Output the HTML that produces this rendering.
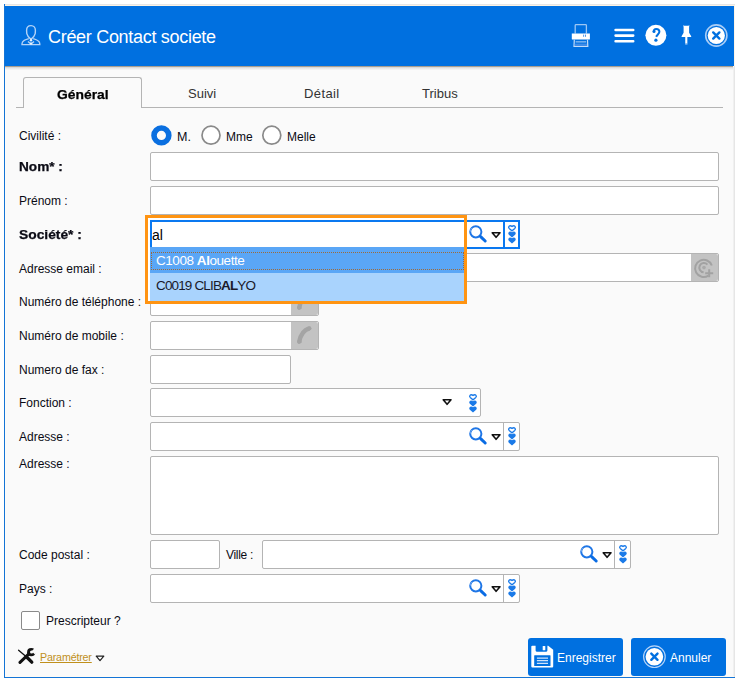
<!DOCTYPE html>
<html>
<head>
<meta charset="utf-8">
<style>
html,body{margin:0;padding:0;background:#fff;}
body{width:736px;height:678px;position:relative;overflow:hidden;font-family:"Liberation Sans",sans-serif;color:#1a1a1a;}
.a{position:absolute;}
#win{left:4px;top:4px;width:731px;height:674px;background:#fafafa;}
#topline{left:4px;top:4px;width:731px;height:1px;background:#e6e6e6;}
#topline2{left:5px;top:5px;width:729px;height:1px;background:#fdf3e4;}
#lb{left:4px;top:4px;width:1px;height:674px;background:#1474d6;}
#bb{left:4px;top:677px;width:731px;height:1px;background:#1474d6;}
#rb{left:733px;top:67px;width:1px;height:610px;background:#f0f0f0;}
#rb2{left:734px;top:5px;width:1px;height:672px;background:#e6e6e6;}
#hcream{left:734px;top:5px;width:1px;height:61px;background:#fdf5e8;}
#cream2{left:5px;top:67px;width:1px;height:610px;background:#fdfcf8;}
#cream3{left:5px;top:676px;width:729px;height:1px;background:#fdfbf6;}
#hdr{left:5px;top:6px;width:729px;height:60px;background:#0070e0;}
#hshadow{left:5px;top:66px;width:728px;height:1px;background:#a99f91;}
#hshadow2{left:5px;top:67px;width:728px;height:3px;background:linear-gradient(#d2d2d2,#eeeeee 60%,#f7f7f7);}
.title{left:48px;top:27px;font-size:18px;letter-spacing:-0.3px;color:#fff;white-space:nowrap;}
.lbl{font-size:12px;white-space:nowrap;color:#0a0a14;}
.b{font-weight:bold;-webkit-text-stroke:0.25px currentColor;}
.fld{background:#fff;border:1px solid #b4b4b4;border-radius:2px;box-sizing:border-box;}
.btn{background:#c3c3c3;border-radius:0 2px 2px 0;}
.sep{width:1px;background:#b4b4b4;}
.tab{font-size:13px;white-space:nowrap;color:#333;}
</style>
</head>
<body>

<svg width="0" height="0" style="position:absolute">
 <defs>
  <symbol id="mag" viewBox="0 0 20 20">
   <circle cx="7.4" cy="7.4" r="5.6" fill="none" stroke="#1f76e6" stroke-width="2"/>
   <path d="M1.9 7.4a5.5 5.5 0 0 1 1.6-3.9" fill="none" stroke="#6aa5f0" stroke-width="1"/>
   <path d="M12.2 12.2l4.6 4.4" stroke="#0a6ce4" stroke-width="3" stroke-linecap="round"/>
  </symbol>
  <symbol id="arr" viewBox="0 0 12 9">
   <path d="M2.2 2.8h7.8L6.1 7.3z" fill="#fff" stroke="#111" stroke-width="1.6" stroke-linejoin="round"/>
  </symbol>
  <symbol id="spin" viewBox="0 0 10 20">
   <path d="M2 2.4c.7-.8 1.8-.8 3 0 1.2-.8 2.3-.8 3 0 .6.7.3 1.5-.2 2L5 6.8 2.2 4.4c-.5-.5-.8-1.3-.2-2z" fill="none" stroke="#1a7ae8" stroke-width="1.3"/>
   <path d="M1.5 8.4c.7-1 2.2-1 3.5-.2 1.3-.8 2.8-.8 3.5.2.6 1 0 2-.6 2.5L5 13.4 2.1 10.9c-.6-.5-1.2-1.5-.6-2.5z" fill="#1a7ae8"/>
   <path d="M1.5 14.4c.7-1 2.2-1 3.5-.2 1.3-.8 2.8-.8 3.5.2.6 1 0 2-.6 2.5L5 19.4 2.1 16.9c-.6-.5-1.2-1.5-.6-2.5z" fill="#1a7ae8"/>
  </symbol>
 </defs>
</svg>
<div class="a" id="win"></div>
<div class="a" id="topline"></div>
<div class="a" id="topline2"></div>
<div class="a" id="hdr"></div>
<div class="a" id="lb"></div>
<div class="a" id="bb"></div>
<div class="a" id="rb"></div><div class="a" id="rb2"></div><div class="a" id="hcream"></div><div class="a" id="cream2"></div><div class="a" id="cream3"></div>
<div class="a" id="hshadow"></div>
<div class="a" id="hshadow2"></div>

<!-- header content -->
<div class="a title">Créer Contact societe</div>

<!-- tabs -->
<div class="a" style="left:16px;top:107px;width:707px;height:1px;background:#b4b4b4;"></div>
<div class="a" style="left:23px;top:77px;width:119px;height:31px;box-sizing:border-box;border:1px solid #b4b4b4;border-bottom:none;border-radius:3px 3px 0 0;background:#fafafa;"></div>
<div class="a tab b" style="left:57px;top:87px;font-size:13px;color:#000;transform:scaleX(1.065);transform-origin:0 0;">Général</div>
<div class="a tab" style="left:188px;top:86px;">Suivi</div>
<div class="a tab" style="left:304px;top:86px;letter-spacing:0.4px;">Détail</div>
<div class="a tab" style="left:422px;top:86px;">Tribus</div>

<!-- labels -->
<div class="a lbl" style="left:19px;top:129px;">Civilité :</div>
<div class="a lbl b" style="left:19px;top:160px;transform:scaleX(1.135);transform-origin:0 0;">Nom* :</div>
<div class="a lbl" style="left:19px;top:194px;">Prénom :</div>
<div class="a lbl b" style="left:19px;top:228px;transform:scaleX(1.15);transform-origin:0 0;">Société* :</div>
<div class="a lbl" style="left:19px;top:262px;">Adresse email :</div>
<div class="a lbl" style="left:19px;top:295px;">Numéro de téléphone :</div>
<div class="a lbl" style="left:19px;top:329px;">Numéro de mobile :</div>
<div class="a lbl" style="left:19px;top:363px;">Numero de fax :</div>
<div class="a lbl" style="left:19px;top:396px;">Fonction :</div>
<div class="a lbl" style="left:19px;top:430px;">Adresse :</div>
<div class="a lbl" style="left:19px;top:457px;">Adresse :</div>
<div class="a lbl" style="left:19px;top:548px;">Code postal :</div>
<div class="a lbl" style="left:19px;top:582px;">Pays :</div>

<!-- fields -->
<div class="a fld" style="left:150px;top:152px;width:569px;height:29px;"></div>
<div class="a fld" style="left:150px;top:186px;width:569px;height:29px;"></div>
<div class="a fld" style="left:150px;top:253px;width:569px;height:29px;"></div>
<div class="a fld" style="left:150px;top:287px;width:169px;height:29px;"></div>
<div class="a fld" style="left:150px;top:321px;width:169px;height:29px;"></div>
<div class="a fld" style="left:150px;top:355px;width:141px;height:29px;"></div>
<div class="a fld" style="left:150px;top:388px;width:331px;height:29px;"></div>
<div class="a fld" style="left:150px;top:422px;width:370px;height:29px;"></div>
<div class="a fld" style="left:150px;top:456px;width:569px;height:79px;"></div>
<div class="a fld" style="left:150px;top:540px;width:70px;height:29px;"></div>
<div class="a lbl" style="left:226px;top:548px;letter-spacing:-0.3px;">Ville :</div>
<div class="a fld" style="left:262px;top:540px;width:369px;height:29px;"></div>
<div class="a fld" style="left:150px;top:574px;width:370px;height:29px;"></div>


<!-- header icons -->
<svg class="a" style="left:18px;top:22px" width="26" height="26" viewBox="0 0 26 26">
 <g fill="none" stroke="#b3d3f7" stroke-width="1.4">
  <path d="M13 3.6C10.3 3.6 8.6 5.5 8.6 8.4L8.8 11.6C9.2 13.4 10.8 15.6 13 17.4 15.2 15.6 16.8 13.4 17.2 11.6L17.4 8.4C17.4 5.5 15.7 3.6 13 3.6Z"/>
  <path d="M10.8 16.6C7.4 17.6 5 18.8 4.4 20.2 4 21 4 21.8 4 22.6H21.8C21.8 21.8 21.8 21 21.4 20.2 20.8 18.8 18.4 17.6 15.2 16.6"/>
  <path d="M10 19.6C11 20.6 12 21.4 13 21.6 14 21.4 15 20.6 16 19.6"/>
 </g>
 <circle cx="13" cy="18.2" r="1.2" fill="#e8f2fd"/><circle cx="13" cy="21.6" r="1.2" fill="#e8f2fd"/>
</svg>
<!-- printer -->
<svg class="a" style="left:566px;top:20px" width="30" height="30" viewBox="0 0 30 30">
 <path d="M9.2 13.6V5.4Q9.2 4.6 10 4.6H19.6Q20.4 4.6 20.4 5.4V13.6" fill="none" stroke="#9cc6f4" stroke-width="1.3"/>
 <path d="M5.8 13.4H23.9V18.9Q23.9 19.6 23.2 19.6H6.5Q5.8 19.6 5.8 18.9Z" fill="#fff"/>
 <rect x="17.2" y="14.6" width="0.9" height="2.2" fill="#3c8be6"/><rect x="19.1" y="14.6" width="0.9" height="2.2" fill="#3c8be6"/>
 <path d="M8.3 19.6L8 26.4H21.8L21.5 19.6" fill="none" stroke="#c4dcf8" stroke-width="1.2"/>
 <rect x="9.6" y="21.2" width="10.6" height="1.3" fill="#8ebdf2"/>
 <rect x="8.8" y="23.6" width="12.2" height="2.4" fill="#3f8ce8"/>
</svg>
<!-- hamburger -->
<svg class="a" style="left:613px;top:27px" width="23" height="17" viewBox="0 0 23 17">
 <g stroke="#fff" stroke-width="2.6" stroke-linecap="round"><path d="M2.6 3h17.6M2.6 8.6h17.6M2.6 14.2h17.6"/></g>
</svg>
<!-- help -->
<svg class="a" style="left:644px;top:23px" width="24" height="24" viewBox="0 0 24 24">
 <circle cx="11.9" cy="12.3" r="10.5" fill="#fff"/>
 <path d="M9.8 8.8C9.6 7 10.6 6 12.2 6 13.9 6 15.4 7 15.4 8.8 15.4 10.6 13.2 11.6 12.1 13.8" fill="none" stroke="#0070e0" stroke-width="2"/>
 <circle cx="10" cy="8.6" r="1.5" fill="#0070e0"/>
 <circle cx="11.9" cy="17.2" r="1.6" fill="#0070e0"/>
</svg>
<!-- pin -->
<svg class="a" style="left:680px;top:24px" width="13" height="22" viewBox="0 0 13 22">
 <path d="M3.2 1.2Q4.6 1.9 6.3 1.7Q8 1.9 9.4 1.2L9.1 3V8.8L11.2 12.2V13.1H1.6V12.2L3.6 8.8V3Z" fill="#fff"/>
 <path d="M6.3 12.6V20.6" stroke="#fff" stroke-width="2.1"/>
 <path d="M6.3 19V21" stroke="#0070e0" stroke-opacity="0.4" stroke-width="2.1"/>
</svg>
<!-- close -->
<svg class="a" style="left:704px;top:23px" width="25" height="25" viewBox="0 0 25 25">
 <circle cx="12.3" cy="12.5" r="10.6" fill="none" stroke="#a9cdf6" stroke-width="1.6"/>
 <circle cx="12.3" cy="12.5" r="8.6" fill="#fff"/>
 <path d="M9.2 9.4l6.2 6.2M15.4 9.4l-6.2 6.2" stroke="#0070e0" stroke-width="2.4" stroke-linecap="round"/>
</svg>

<!-- radios -->
<svg class="a" style="left:150px;top:124px" width="22" height="22" viewBox="0 0 22 22">
 <circle cx="11.4" cy="11.4" r="7.4" fill="none" stroke="#0a6fe0" stroke-width="5.6"/>
</svg>
<div class="a lbl" style="left:177px;top:130px;font-size:12.5px;">M.</div>
<svg class="a" style="left:200px;top:124px" width="22" height="22" viewBox="0 0 22 22">
 <circle cx="11" cy="11.2" r="9" fill="#fff" stroke="#8a8a8a" stroke-width="1.7"/>
</svg>
<div class="a lbl" style="left:226px;top:130px;">Mme</div>
<svg class="a" style="left:261px;top:124px" width="22" height="22" viewBox="0 0 22 22">
 <circle cx="10.8" cy="11.2" r="9" fill="#fff" stroke="#8a8a8a" stroke-width="1.7"/>
</svg>
<div class="a lbl" style="left:287px;top:130px;">Melle</div>

<!-- email/phone buttons -->
<div class="a btn" style="left:691px;top:254px;width:27px;height:27px;"></div>
<svg class="a" style="left:692px;top:255px" width="26" height="26" viewBox="0 0 26 26">
 <path d="M19.8 10.5A8.6 8.6 0 1 0 16.4 20.6" fill="none" stroke="#a2a2a2" stroke-width="2"/>
 <path d="M15.4 9.6A4.6 4.6 0 1 0 11.6 17.2" fill="none" stroke="#a2a2a2" stroke-width="2"/>
 <circle cx="12" cy="12.6" r="1.8" fill="#aaa"/>
 <path d="M17.2 14.2v8M13.2 18.2h8" stroke="#a2a2a2" stroke-width="2"/>
</svg>
<div class="a btn" style="left:291px;top:288px;width:27px;height:27px;"></div>
<div class="a btn" style="left:291px;top:322px;width:27px;height:27px;"></div>
<svg class="a" style="left:292px;top:322px" width="26" height="26" viewBox="0 0 26 26">
 <path d="M17 6.4Q9.6 8.6 7.2 19.6" fill="none" stroke="#a4a4a4" stroke-width="4.4" stroke-linecap="round"/>
 <path d="M14.6 5.6l3.6-1.4 1.6 2.6-3 2.4z" fill="#a4a4a4"/>
 <path d="M5.4 18.6l3.8-.4.6 2.4-3.4 1.4z" fill="#a4a4a4"/>
</svg>
<svg class="a" style="left:292px;top:288px" width="26" height="26" viewBox="0 0 26 26">
 <path d="M17 6.4Q9.6 8.6 7.2 19.6" fill="none" stroke="#a4a4a4" stroke-width="4.4" stroke-linecap="round"/>
 <path d="M14.6 5.6l3.6-1.4 1.6 2.6-3 2.4z" fill="#a4a4a4"/>
 <path d="M5.4 18.6l3.8-.4.6 2.4-3.4 1.4z" fill="#a4a4a4"/>
</svg>
<!-- separators -->
<div class="a sep" style="left:503px;top:423px;height:27px;"></div>
<div class="a sep" style="left:503px;top:575px;height:27px;"></div>
<div class="a sep" style="left:614px;top:541px;height:27px;"></div>
<!-- Société input (focused) -->
<div class="a" style="left:150px;top:220px;width:355px;height:29px;box-sizing:border-box;border:2px solid #0a78f0;background:#fff;"></div>
<div class="a" style="left:503px;top:220px;width:17px;height:29px;box-sizing:border-box;border:2px solid #0a78f0;background:#fff;"></div>
<!-- combo icons -->
<svg class="a" style="left:466px;top:222px" width="24" height="24" viewBox="0 0 24 24"><use href="#mag" x="2.4" y="2.4" width="20" height="20"/></svg><svg class="a" style="left:490px;top:230px" width="12" height="9"><use href="#arr" width="12" height="9"/></svg><svg class="a" style="left:507px;top:224px" width="10" height="20"><use href="#spin" width="10" height="20"/></svg>
<svg class="a" style="left:466px;top:424px" width="24" height="24" viewBox="0 0 24 24"><use href="#mag" x="2.4" y="2.4" width="20" height="20"/></svg><svg class="a" style="left:490px;top:432px" width="12" height="9"><use href="#arr" width="12" height="9"/></svg><svg class="a" style="left:507px;top:426px" width="10" height="20"><use href="#spin" width="10" height="20"/></svg>
<svg class="a" style="left:577px;top:542px" width="24" height="24" viewBox="0 0 24 24"><use href="#mag" x="2.4" y="2.4" width="20" height="20"/></svg><svg class="a" style="left:601px;top:550px" width="12" height="9"><use href="#arr" width="12" height="9"/></svg><svg class="a" style="left:618px;top:544px" width="10" height="20"><use href="#spin" width="10" height="20"/></svg>
<svg class="a" style="left:466px;top:576px" width="24" height="24" viewBox="0 0 24 24"><use href="#mag" x="2.4" y="2.4" width="20" height="20"/></svg><svg class="a" style="left:490px;top:584px" width="12" height="9"><use href="#arr" width="12" height="9"/></svg><svg class="a" style="left:507px;top:578px" width="10" height="20"><use href="#spin" width="10" height="20"/></svg>
<svg class="a" style="left:441px;top:397px" width="12" height="9"><use href="#arr" width="12" height="9"/></svg><svg class="a" style="left:468px;top:393px" width="10" height="20"><use href="#spin" width="10" height="20"/></svg>
<!-- bottom checkbox & footer -->
<div class="a" style="left:21px;top:611px;width:19px;height:19px;box-sizing:border-box;border:1px solid #8a8a8a;border-radius:2px;background:#fff;"></div>
<div class="a lbl" style="left:46px;top:614px;">Prescripteur ?</div>
<svg class="a" style="left:14px;top:644px" width="26" height="26" viewBox="0 0 26 26">
 <defs><mask id="jaw"><rect width="26" height="26" fill="#fff"/><path d="M17.6 7.2l4.6-4.6 3 3-4.6 4.6z" fill="#000"/><circle cx="17.6" cy="8" r="1.6" fill="#000"/></mask></defs>
 <path d="M4.6 6.2L12 12.6" stroke="#111" stroke-width="1.3" stroke-linecap="round"/>
 <path d="M12.6 13L17.8 18.2" stroke="#111" stroke-width="3.3" stroke-linecap="round"/>
 <g mask="url(#jaw)">
  <path d="M6 18.4L14.6 10.2" stroke="#111" stroke-width="3" stroke-linecap="round"/>
  <circle cx="17.2" cy="8.2" r="4.1" fill="#111"/>
 </g>
</svg>
<div class="a" style="left:40px;top:651px;font-size:10.7px;letter-spacing:-0.17px;color:#c0901c;text-decoration:underline;white-space:nowrap;">Paramétrer</div>
<svg class="a" style="left:95px;top:655px" width="10" height="7" viewBox="0 0 10 7"><path d="M1.2 1.2h7.6L5 5.6z" fill="#fff" stroke="#222" stroke-width="1.2" stroke-linejoin="round"/></svg>

<!-- buttons -->
<div class="a" style="left:528px;top:638px;width:95px;height:38px;background:#0070e0;border-radius:3px;"></div>
<svg class="a" style="left:531px;top:645px" width="23" height="23" viewBox="0 0 23 23">
 <path d="M0.3 1.8Q0.3 0.7 1.4 0.7H17.2L22.2 4.8V21.5Q22.2 22.6 21.1 22.6H1.4Q0.3 22.6 0.3 21.5Z" fill="#fff"/>
 <path d="M4.6 0V5.6Q4.6 6.7 5.7 6.7H15.3Q16.4 6.7 16.4 5.6V0Z" fill="#0070e0"/>
 <rect x="11.7" y="0.9" width="2.6" height="4.4" rx="0.6" fill="#fff"/>
 <rect x="3.2" y="10.2" width="16.3" height="10.9" rx="0.5" fill="#0070e0"/>
 <path d="M5.9 13.1H17M5.9 15.6H17M5.9 18.3H17" stroke="#d0e4fb" stroke-width="1.2"/>
</svg>
<div class="a" style="left:557px;top:651px;font-size:12px;color:#fff;white-space:nowrap;">Enregistrer</div>
<div class="a" style="left:631px;top:638px;width:95px;height:38px;background:#0070e0;border-radius:3px;"></div>
<svg class="a" style="left:642px;top:645px" width="25" height="25" viewBox="0 0 25 25">
 <circle cx="12.4" cy="11.7" r="10.8" fill="none" stroke="#b5d4f8" stroke-width="1.2"/>
 <circle cx="12.4" cy="11.7" r="8.8" fill="#fff"/>
 <path d="M9.3 8.6l6.2 6.2M15.5 8.6l-6.2 6.2" stroke="#0070e0" stroke-width="2.4" stroke-linecap="round"/>
</svg>
<div class="a" style="left:670px;top:651px;font-size:12px;color:#fff;white-space:nowrap;">Annuler</div>

<!-- dropdown -->
<div class="a" style="left:145px;top:215px;width:322px;height:89px;box-sizing:border-box;border:3px solid #ff9412;"></div>
<div class="a" style="left:148px;top:218px;width:2px;height:83px;background:#fff;"></div>
<div class="a" style="left:150px;top:218px;width:314px;height:2px;background:#fff;"></div>
<div class="a" style="left:150px;top:220px;width:314px;height:2px;background:#0a78f0;"></div>
<div class="a" style="left:150px;top:220px;width:2px;height:27px;background:#0a78f0;"></div>
<div class="a" style="left:150px;top:247px;width:314px;height:26px;background:#5aa6f6;"></div>
<div class="a" style="left:151px;top:252px;width:313px;height:18px;box-sizing:border-box;border:1px dotted #9c6a3a;"></div>
<div class="a" style="left:150px;top:273px;width:314px;height:28px;background:#a9d3fd;"></div>
<div class="a" style="left:152px;top:227px;font-size:14px;color:#000;white-space:nowrap;">al</div>
<div class="a" style="left:156px;top:253px;font-size:13.5px;letter-spacing:-0.45px;color:#fff;white-space:nowrap;">C1008 <b>Al</b>ouette</div>
<div class="a" style="left:156px;top:278px;font-size:13.5px;letter-spacing:-0.85px;color:#1a1a2a;white-space:nowrap;">C0019 CLIB<b>AL</b>YO</div>
</body>
</html>
